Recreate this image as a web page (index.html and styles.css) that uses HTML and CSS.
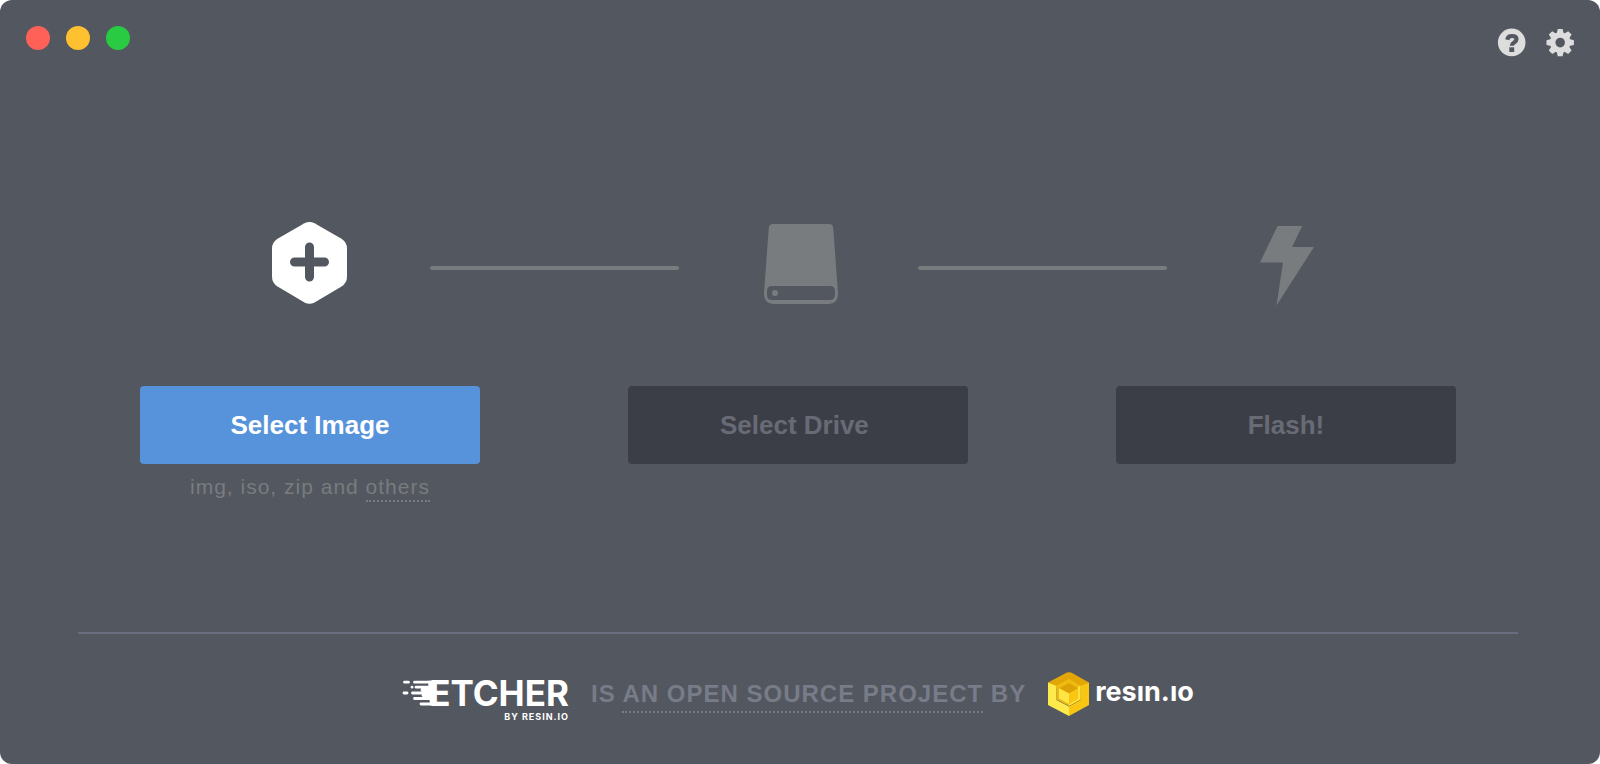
FILE: index.html
```html
<!DOCTYPE html>
<html lang="en">
<head>
<meta charset="utf-8">
<title>Etcher</title>
<link rel="stylesheet" href="styles.css">
</head>
<body>
<div class="window">
  <header class="titlebar">
    <div class="lights">
      <button class="light light-close" aria-label="Close"></button>
      <button class="light light-minimize" aria-label="Minimize"></button>
      <button class="light light-zoom" aria-label="Zoom"></button>
    </div>
    <nav class="tools">
      <button class="tool" aria-label="Help">
        <svg width="28" height="28" viewBox="0 0 28 28"><circle cx="13.700" cy="13.400" r="13.800" fill="#ddd"/><path d="M9.200 10.800C9.800 8 11.200 7 13.800 7c2.800 0 4.700 1.200 4.700 3.300 0 3.200-4.700 3-4.700 6.400" fill="none" stroke="#535760" stroke-width="4.200"/><path d="M11.300 18.300h4.900v4.700h-4.900z" fill="#535760"/></svg>
      </button>
      <button class="tool" aria-label="Settings">
        <svg width="28" height="28" viewBox="0 0 28 28"><g fill="#ddd"><circle cx="14.200" cy="13.600" r="10.300"/><g id="teeth"><path id="tooth" d="M10.700 4.600L11.800-.1h4.800L17.700 4.600v18L16.600 27.300h-4.800L10.700 22.600z"/><use href="#tooth" transform="rotate(90 14.200 13.600)"/></g><use href="#teeth" transform="rotate(45 14.200 13.600)"/></g><circle cx="14.200" cy="13.600" r="4.800" fill="#535760"/></svg>
      </button>
    </nav>
  </header>

  <main class="main">
    <div class="progress">
      <svg class="icon" width="76" height="84" viewBox="0 0 76 84"><path d="M32.500 2.200Q37.500 -.4 42.500 2.200L69.500 17.800Q75 21.500 75 27.500V55.500Q75 62 69.500 65.500L42.500 81.400Q37.500 84 32.500 81.400L5.500 65.500Q0 62 0 55.500V27.500Q0 21.500 5.500 17.800Z" fill="#fff"/><path d="M37.500 26v30M22.500 41h30" stroke="#535760" stroke-width="9" stroke-linecap="round"/></svg>
      <span class="line"></span>
      <svg class="icon" width="80" height="84" viewBox="-5 0 80 84"><path fill="#787c7f" fill-rule="evenodd" d="M9 3h56q4 0 4.200 4L74 72q0 11-9 11H9q-9 0-9-11L4.800 7Q5 3 9 3zM8 65q-5 0-5 5v4q0 5 5 5h58q5 0 5-5v-4q0-5-5-5z"/><circle cx="11" cy="72" r="3" fill="#787c7f"/></svg>
      <span class="line"></span>
      <svg class="icon" width="54" height="84" viewBox="0 0 54 84"><path fill="#787c7f" d="M17.500 5H42.300L32 26H54L16.500 84.500 23 41.500H0z"/></svg>
    </div>

    <div class="actions">
      <div class="step">
        <button class="action action-primary">Select Image</button>
        <p class="hint">img, iso, zip and <a class="hint-link" href="#formats">others</a></p>
      </div>
      <div class="step"><button class="action" disabled>Select Drive&nbsp;</button></div>
      <div class="step"><button class="action" disabled>Flash!</button></div>
    </div>
  </main>

  <footer class="footer">
    <a class="etcher" href="#etcher">
      <span class="etcher-row">
        <svg width="33" height="26" viewBox="0 0 33 26"><path d="M26 .8h7v24.400h-5z" fill="#fff"/><g stroke="#fff" stroke-width="2.800" stroke-linecap="round"><path d="M2.500 2.200h4M12.500 2.200h20M10 7.200h.1M14 7.200h16M20 10h9M2 13h3M10.500 13h18M21 15.500h9M12.500 18.500h18M19 24h13"/></g></svg>
        <span class="etcher-name">ETCHER</span>
      </span>
      <span class="etcher-by">BY RESIN.IO</span>
    </a>
    <p class="credit">IS <a class="credit-link" href="#source">AN OPEN SOURCE PROJECT</a> BY</p>
    <a class="resin" href="#resin" aria-label="resin.io">
      <svg width="42" height="44" viewBox="0 0 42 44"><path d="M17 1.500Q21-.8 25 1.500L41 10.500 21 22 0 10.500z" fill="#e2a607"/><path d="M0 10.500L8.500 14V28L21 34.500V44L0 33z" fill="#ffea4c"/><path d="M41 10.500L32.500 14V28L21 34.500V44L41 33z" fill="#f8c613"/><path d="M21 7L32.500 13.500V27.500L21 34 8.500 27.500V13.500z" fill="#eebb10"/><path d="M32.500 13.500V27.500L21 34V32L30 26.500V15z" fill="#ffe23c"/><path d="M21 11L30 16.200 21 21.500 11 16.200z" fill="#dfa206"/><path d="M11 16.200L21 21.500V32L11 26.500z" fill="#ffe645"/><path d="M30 16.200L21 21.500V32L30 26.500z" fill="#f8c613"/></svg>
      <span class="resin-name">resın.ıo</span>
    </a>
  </footer>
</div>
</body>
</html>
```
FILE: styles.css
```css
* { box-sizing: border-box; }

body {
  margin: 0;
  background: #fff;
  font-family: "Liberation Sans", Arial, sans-serif;
}

button {
  padding: 0;
  border: 0;
  background: none;
  font: inherit;
}

a { color: inherit; text-decoration: none; }
p { margin: 0; }
svg { display: block; overflow: visible; }

.window {
  display: flex;
  flex-direction: column;
  min-height: 100vh;
  border-radius: 12px;
  background: #535760;
}

.titlebar {
  display: flex;
  justify-content: space-between;
  padding: 26px 26px 0;
}

.lights { display: flex; gap: 16px; }

.light { width: 24px; height: 24px; border-radius: 50%; }
.light-close { background: #ff6159; }
.light-minimize { background: #ffc130; }
.light-zoom { background: #29cb42; }

.tools { display: flex; gap: 20px; padding-top: 3px; }

.main { flex: 1; padding-top: 164px; }

.progress {
  display: grid;
  grid-template-columns: 240fr 249fr 239fr 249fr 239fr;
  align-items: center;
  justify-items: center;
  padding: 0 194px 0 190px;
}

.line {
  width: 100%;
  height: 4px;
  margin-top: 10px;
  border-radius: 2px;
  background: #787c7f;
}

.actions {
  display: grid;
  grid-template-columns: repeat(3, 1fr);
  gap: 148px;
  padding: 81px 144px 0 140px;
}

.action {
  width: 100%;
  height: 78px;
  border-radius: 4px;
  background: #3c3e47;
  color: #686b75;
  font-size: 26px;
  font-weight: 700;
}

.action-primary { background: #5793db; color: #fff; }

.hint {
  padding-top: 10px;
  color: #787c7f;
  font-size: 21px;
  line-height: 26px;
  letter-spacing: 1px;
  text-align: center;
}

.hint-link, .credit-link { border-bottom: 2px dotted #787c7f; }
.hint-link { padding-bottom: 2px; }
.credit-link { padding-bottom: 4px; }

.footer {
  display: flex;
  justify-content: center;
  gap: 22px;
  height: 132px;
  margin: 0 82px 0 78px;
  padding-top: 38px;
  border-top: 2px solid #686e7d;
}

.etcher {
  display: flex;
  flex-direction: column;
  align-items: flex-end;
  padding-top: 8px;
  color: #fff;
}

.etcher-row { display: flex; height: 26px; }

.etcher-name {
  margin-left: -6px;
  font-family: Inter, sans-serif;
  font-size: 35px;
  font-weight: 700;
  line-height: 26px;
}

.etcher-by {
  padding-top: 5px;
  font-family: Inter, sans-serif;
  font-size: 9px;
  font-weight: 700;
  line-height: 12px;
  letter-spacing: 1px;
}

.credit {
  padding-top: 8px;
  color: #787c88;
  font-size: 24px;
  font-weight: 700;
  line-height: 28px;
  letter-spacing: 1px;
}

.resin {
  display: flex;
  align-items: flex-start;
  gap: 5px;
  color: #fff;
}

.resin-name {
  font-family: Inter, sans-serif;
  font-size: 27px;
  font-weight: 700;
  line-height: 40px;
}
```
